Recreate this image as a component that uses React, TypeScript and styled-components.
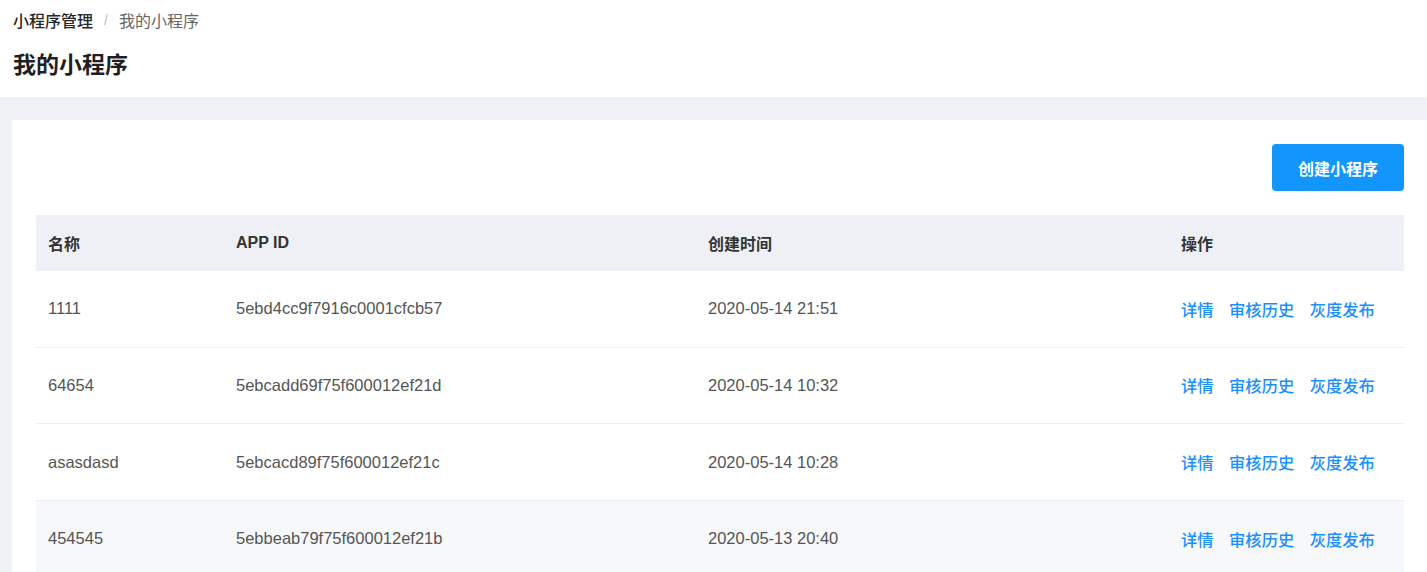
import styled, { createGlobalStyle } from 'styled-components';

const GlobalStyle = createGlobalStyle`
    html, body {
        margin: 0;
        padding: 0;
        background: #f0f2f5;
        font-family: "Liberation Sans", "Noto Sans CJK SC", sans-serif;
    }
`;

type App = { name: string; id: string; time: string };

const apps: App[] = [
    { name: '1111', id: '5ebd4cc9f7916c0001cfcb57', time: '2020-05-14 21:51' },
    { name: '64654', id: '5ebcadd69f75f600012ef21d', time: '2020-05-14 10:32' },
    { name: 'asasdasd', id: '5ebcacd89f75f600012ef21c', time: '2020-05-14 10:28' },
    { name: '454545', id: '5ebbeab79f75f600012ef21b', time: '2020-05-13 20:40' },
];

function App() {
    return (
        <Page>
            <GlobalStyle />
            <Header>
                <Breadcrumb>
                    <Crumb>小程序管理</Crumb>
                    <Sep>/</Sep>
                    <Crumb current>我的小程序</Crumb>
                </Breadcrumb>
                <Title>我的小程序</Title>
            </Header>
            <Body>
                <Card>
                    <Toolbar>
                        <PrimaryButton>创建小程序</PrimaryButton>
                    </Toolbar>
                    <Table>
                        <HeadRow>
                            <HeadCell>名称</HeadCell>
                            <HeadCell>APP ID</HeadCell>
                            <HeadCell>创建时间</HeadCell>
                            <HeadCell>操作</HeadCell>
                        </HeadRow>
                        {apps.map((a, i) => (
                            <Row key={a.id} hovered={i === apps.length - 1}>
                                <Cell>{a.name}</Cell>
                                <Cell>{a.id}</Cell>
                                <Cell>{a.time}</Cell>
                                <Actions>
                                    <Link>详情</Link>
                                    <Link>审核历史</Link>
                                    <Link>灰度发布</Link>
                                </Actions>
                            </Row>
                        ))}
                    </Table>
                </Card>
            </Body>
        </Page>
    );
}
export default App;

const Page = styled.div`
    width: 100%;
    min-height: 572px;
    background: #f0f2f5;
`;
const Header = styled.div`
    background: #fff;
    padding: 10px 13px 0 13px;
    height: 87px;
`;
const Breadcrumb = styled.div`
    display: flex;
    align-items: center;
    height: 20px;
    font-size: 16px;
`;
const Crumb = styled.span<{ current?: boolean }>`
    color: ${(p) => (p.current ? '#666' : '#262626')};
    font-weight: ${(p) => (p.current ? 400 : 500)};
`;
const Sep = styled.span`
    color: #bfbfbf;
    margin: 0 11px;
    font-size: 14px;
`;
const Title = styled.h1`
    margin: 20px 0 0 0;
    font-size: 23px;
    font-weight: 600;
    color: #1f1f1f;
    line-height: 30px;
`;
const Body = styled.div`
    padding: 23px 0 0 12px;
`;
const Card = styled.div`
    background: #fff;
    padding: 24px 23px 0 24px;
`;
const Toolbar = styled.div`
    display: flex;
    justify-content: flex-end;
    margin-bottom: 24px;
`;
const PrimaryButton = styled.button`
    width: 132px;
    height: 47px;
    border: none;
    border-radius: 4px;
    background: #1296fb;
    color: #fff;
    font-family: inherit;
    font-size: 16px;
    font-weight: 600;
    cursor: pointer;
`;
const Table = styled.div`
    display: flex;
    flex-direction: column;
`;
const columns = '188px 472px 473px 1fr';
const HeadRow = styled.div`
    display: grid;
    grid-template-columns: ${columns};
    height: 56px;
    align-items: center;
    background: #eef0f5;
`;
const HeadCell = styled.div`
    padding-left: 12px;
    font-size: 16px;
    font-weight: 600;
    color: #333;
`;
const Row = styled.div<{ hovered?: boolean }>`
    display: grid;
    grid-template-columns: ${columns};
    height: 75.67px;
    align-items: center;
    border-bottom: 1px solid #ebeef5;
    background: ${(p) => (p.hovered ? '#f7f8fa' : '#fff')};
`;
const Cell = styled.div`
    padding-left: 12px;
    font-size: 16.5px;
    color: #555;
`;
const Actions = styled.div`
    display: flex;
    gap: 15.5px;
    padding-left: 12px;
`;
const Link = styled.a`
    font-size: 16.3px;
    font-weight: 500;
    color: #1890ff;
    cursor: pointer;
`;
